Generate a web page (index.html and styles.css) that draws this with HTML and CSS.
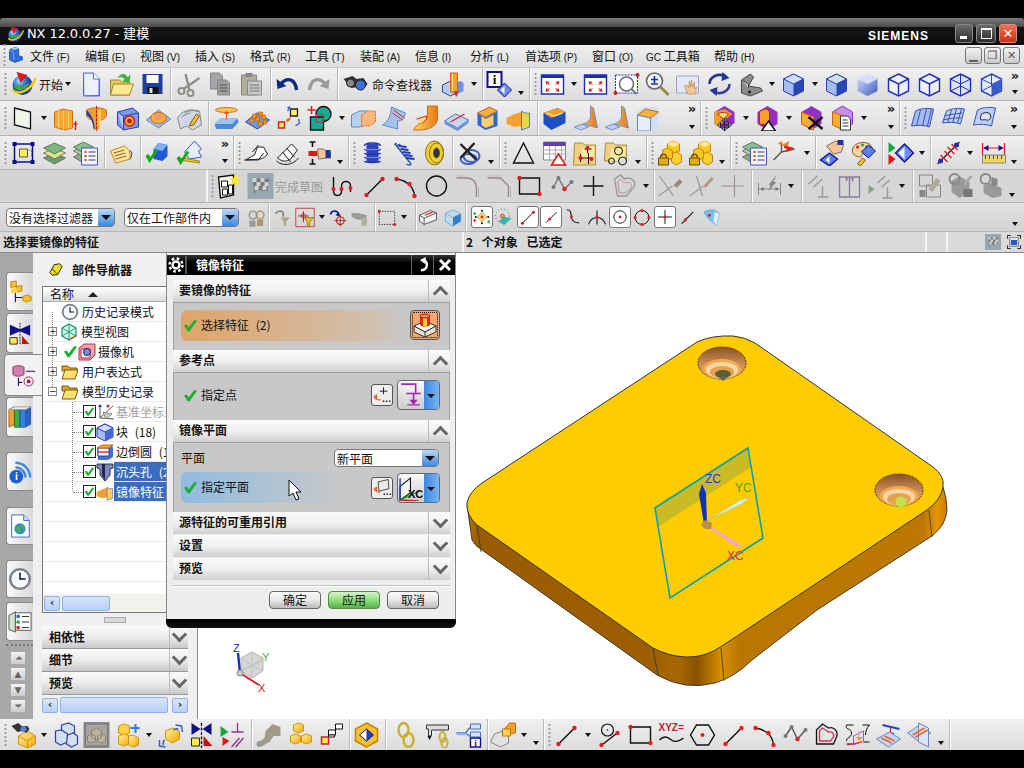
FILE: index.html
```html
<!DOCTYPE html>
<html lang="zh">
<head>
<meta charset="utf-8">
<title>NX 12.0.0.27 - 建模</title>
<link rel="stylesheet" href="styles.css">
</head>
<body>
<svg class="defs" aria-hidden="true">
<defs>
<linearGradient id="gSide" x1="0" x2="1" y1="0" y2="0"><stop offset="0" stop-color="#b97c00"/><stop offset=".02" stop-color="#9a5c00"/><stop offset=".38" stop-color="#9c5e00"/><stop offset=".44" stop-color="#a86800"/><stop offset=".48" stop-color="#8a5200"/><stop offset=".53" stop-color="#d89000"/><stop offset=".57" stop-color="#b97600"/><stop offset=".95" stop-color="#bc7800"/><stop offset=".98" stop-color="#e69400"/><stop offset="1" stop-color="#c67e00"/></linearGradient>
<linearGradient id="gBore" x1="0" x2="0" y1="0" y2="1"><stop offset="0" stop-color="#8a5226"/><stop offset=".5" stop-color="#c88a50"/><stop offset="1" stop-color="#e8b070"/></linearGradient>
<linearGradient id="gOrange" x1="0" x2="1" y1="0" y2="0"><stop offset="0" stop-color="#ffd860"/><stop offset="1" stop-color="#e87818"/></linearGradient>
<linearGradient id="gYel" x1="0" x2="1" y1="0" y2="1"><stop offset="0" stop-color="#fff2a0"/><stop offset="1" stop-color="#f2a800"/></linearGradient>
<linearGradient id="gBlue" x1="0" x2="1" y1="0" y2="1"><stop offset="0" stop-color="#dbe6ff"/><stop offset="1" stop-color="#3a58c4"/></linearGradient>
<radialGradient id="gGlobe" cx=".35" cy=".3"><stop offset="0" stop-color="#bfe8ff"/><stop offset=".55" stop-color="#2f7fe0"/><stop offset="1" stop-color="#1b3fa0"/></radialGradient>

<symbol id="globe" viewBox="0 0 26 26"><circle cx="12" cy="14" r="10" fill="url(#gGlobe)"/><path d="M4 12c4 4 10 4 16-1-3 7-11 11-16 6z" fill="#3fa83f"/><path d="M2 19c6 6 19 0 23-12" fill="none" stroke="#f6c800" stroke-width="2.4"/><path d="M6 1l11 3-7 8z" fill="#e01818"/></symbol>
<symbol id="nxm" viewBox="0 0 26 26"><path d="M6 3l8-2 5 2v11l6 2v5l-12 4-9-4V6z" fill="#2e6cd8" stroke="#123a90"/><path d="M6 3l8-2 5 2-8 2z" fill="#a8ccff"/><path d="M4 6l7 2v14" fill="none" stroke="#a8ccff"/></symbol>
<symbol id="doc" viewBox="0 0 26 26"><path d="M6 2h10l6 6v17H6z" fill="url(#gBlue)" stroke="#5a66d8"/><path d="M7 3h9l5 5v16H7z" fill="#eef0ff"/><path d="M16 2v6h6" fill="#fff" stroke="#5a66d8"/></symbol>
<symbol id="openf" viewBox="0 0 26 26"><path d="M2 9h9l2 2h8v13H2z" fill="#e8c868" stroke="#a48820"/><path d="M5 13h20l-4 11H2z" fill="#fbe896" stroke="#a48820"/><path d="M9 7c3-5 8-5 10-1l3-2-1 8-7-2 2-2c-2-2-4-2-7-1z" fill="#3db43d"/></symbol>
<symbol id="save" viewBox="0 0 26 26"><path d="M3 3h20v20H3z" fill="#1f3f9e"/><path d="M7 4h12v8H7z" fill="#fff"/><path d="M8 16h11v7H8z" fill="#111"/><path d="M10 17h3v5h-3z" fill="#ddd"/></symbol>
<symbol id="cut" viewBox="0 0 26 26"><circle cx="6" cy="20" r="3" fill="none" stroke="#8f8f86" stroke-width="2"/><circle cx="15" cy="22" r="3" fill="none" stroke="#8f8f86" stroke-width="2"/><path d="M8 18L24 7M14 19L10 3" stroke="#8f8f86" stroke-width="2.4"/></symbol>
<symbol id="copy" viewBox="0 0 26 26"><path d="M4 2h9l3 3v13H4z" fill="#a3a3a8" stroke="#888"/><path d="M11 9h9l3 3v12H11z" fill="#9f9f9f" stroke="#888"/><path d="M13 14h8M13 17h8M13 20h8" stroke="#555"/></symbol>
<symbol id="paste" viewBox="0 0 26 26"><path d="M3 4h15v20H3z" fill="#b0ad9a" stroke="#8a8878"/><path d="M7 2h7v4H7z" fill="#888"/><path d="M9 10h14v14H9z" fill="#c8c8c8" stroke="#888"/><path d="M11 14h10M11 17h10M11 20h10" stroke="#777"/></symbol>
<symbol id="undo" viewBox="0 0 26 26"><path d="M7 12c6-6 14-4 15 7" fill="none" stroke="#0c2a7e" stroke-width="3.4"/><path d="M2 8l1 10 9-3z" fill="#0c2a7e"/></symbol>
<symbol id="redo" viewBox="0 0 26 26"><path d="M19 12c-6-6-14-4-15 7" fill="none" stroke="#9a9a9a" stroke-width="3.4"/><path d="M24 8l-1 10-9-3z" fill="#9a9a9a"/></symbol>
<symbol id="bino" viewBox="0 0 26 26"><path d="M1 8l9-3 4 3 7-1 4 6-5 6-5-3-6 1z" fill="#2e2e2e"/><circle cx="18" cy="14" r="5" fill="#3f6fd8" stroke="#222"/><circle cx="8" cy="12" r="4" fill="#888" stroke="#222"/></symbol>
<symbol id="role" viewBox="0 0 26 26"><path d="M3 14l8-4 8 4v7l-8 4-8-4z" fill="#b8caf5" stroke="#2a48b0"/><path d="M13 13l8-3 3 2v8l-8 4z" fill="#6d93e8"/><path d="M11 2h7v19h-7z" fill="#f7a028" stroke="#d86010"/><path d="M13 3v17" stroke="#ffe080"/><path d="M14 21l3 5 2-6z" fill="#e02020"/></symbol>
<symbol id="info" viewBox="0 0 26 26"><path d="M1 1h14v15H1z" fill="#fff" stroke="#10108a" stroke-width="2"/><text x="8" y="13" text-anchor="middle" font-family="Liberation Serif" font-weight="700" font-size="13" fill="#000">i</text><path d="M18 12l7 7-7 7-7-7z" fill="#6c8cf0" stroke="#10108a"/><path d="M18 15l-4 4 4 4z" fill="#fff"/></symbol>
<symbol id="fit" viewBox="0 0 26 26"><path d="M2 4h22v19H2z" fill="#fff" stroke="#1c2fa8" stroke-width="1.4"/><path d="M2 4h22v3H2z" fill="#1c2fa8"/><path d="M6 10l4 1-3 3zM20 10l-4 1 3 3zM6 21l4-1-3-3zM20 21l-4-1 3-3z" fill="#e02020"/><path d="M8 12l2 2M18 12l-2 2M8 19l2-2M18 19l-2-2" stroke="#e02020"/></symbol>
<symbol id="wnd" viewBox="0 0 26 26"><path d="M1 7V1h6M19 1h6v6M25 19v6h-6M7 25H1v-6" fill="none" stroke="#333" stroke-width="2"/><path d="M5 5h16v16H5z" fill="#fff" stroke="#223"/><path d="M7 9h12v10H7z" fill="#2a58c8"/></symbol>
<symbol id="zrect" viewBox="0 0 26 26"><path d="M2 4h22v18H2z" fill="#fff" stroke="#2030c0" stroke-dasharray="2 1"/><circle cx="13" cy="13" r="7" fill="#fff" stroke="#666" stroke-width="1.5"/><path d="M18 18l5 5" stroke="#777" stroke-width="2"/><circle cx="24" cy="4" r="2" fill="#d01818"/><circle cx="2" cy="22" r="2" fill="#d01818"/></symbol>
<symbol id="zin" viewBox="0 0 26 26"><circle cx="10" cy="10" r="8" fill="#eef2f2" stroke="#667" stroke-width="1.6"/><path d="M10 5v7M6.5 8.500h7M6.500 13h7" stroke="#1c2f90" stroke-width="1.600"/><path d="M16 16l8 8" stroke="#9a8a50" stroke-width="3"/></symbol>
<symbol id="pan" viewBox="0 0 26 26"><path d="M1 5h22v17H1z" fill="#e4e8f6" stroke="#9aa4c8"/><path d="M12 23l-3-8 2-1 2 3 1-7 1 6 1-7 1 7 2-5 0 7 2-2-1 7z" fill="#f4c590" stroke="#b08040" stroke-width=".6"/></symbol>
<symbol id="rot" viewBox="0 0 26 26"><path d="M3 13C3 6 11 2 18 5" fill="none" stroke="#1c3894" stroke-width="2.600"/><path d="M23 13c0 7-8 11-15 8" fill="none" stroke="#3a3aa0" stroke-width="2.600"/><path d="M16 1l7 6-8 3zM10 25l-7-6 8-3z" fill="#1c3894"/></symbol>
<symbol id="cam" viewBox="0 0 26 26"><path d="M4 18V9l9-6 3 3-5 9 12 2 2 3-12 5-9-3z" fill="#8c8c8c" stroke="#444"/><path d="M5 9l6 4v4" fill="#c4c4c4" stroke="#444"/><circle cx="12" cy="21" r="1.500" fill="#222"/></symbol>
<symbol id="cS" viewBox="0 0 26 26"><path d="M13 3l10 5v12l-10 5-10-5V8z" fill="#a4bcf4" stroke="#2a3fb0"/><path d="M3 8l10 5 10-5-10-5z" fill="#d0ddfc" stroke="#2a3fb0"/><path d="M13 13l10-5v12l-10 5z" fill="#2648b6"/></symbol>
<symbol id="cR" viewBox="0 0 26 26"><path d="M13 3l10 5v12l-10 5-10-5V8z" fill="url(#gBlue)"/><path d="M3 8l10 5 10-5-10-5z" fill="#d6e0fb"/></symbol>
<symbol id="cW" viewBox="0 0 26 26"><path d="M13 3l10 5v12l-10 5-10-5V8z" fill="#eef0fc" stroke="#1c2fc0" stroke-width="1.400"/><path d="M3 8l10 5 10-5M13 13v12" fill="none" stroke="#1c2fc0" stroke-width="1.400"/></symbol>
<symbol id="cW2" viewBox="0 0 26 26"><path d="M13 3l10 5v12l-10 5-10-5V8z" fill="#dde3fb" stroke="#1c2fc0" stroke-width="1.400"/><path d="M3 8l10 5 10-5M13 13v12M3 20l10-5 10 5M13 3v12" fill="none" stroke="#1c2fc0"/></symbol>
<symbol id="cW3" viewBox="0 0 26 26"><path d="M13 3l10 5v12l-10 5-10-5V8z" fill="#e6ebfb" stroke="#2a4ac0" stroke-width="1.400"/><path d="M13 13l10-5v12l-10 5z" fill="#3a5cc8"/><path d="M3 8l10 5M3 20l10-5M13 3v12" fill="none" stroke="#2a4ac0"/></symbol>
<symbol id="sheet" viewBox="0 0 26 26"><path d="M5 3l16 4v17L5 20z" fill="#eef6ec" stroke="#111" stroke-width="1.300"/></symbol>
<symbol id="ext" viewBox="0 0 26 26"><path d="M2 7l8-3 10 2v17l-8 2-10-3z" fill="#f6a834" stroke="#d86a10"/><path d="M11 6v19M6 5v18M16 6v18" stroke="#ffd070"/><path d="M23 16v9M21 19h4" stroke="#d81818" stroke-width="1.400"/></symbol>
<symbol id="rev" viewBox="0 0 26 26"><path d="M3 5c5-3 15-3 20 0v5c-1 5-5 4-7 6l-1 8h-4l-1-8c-2-2-6-1-7-6z" fill="#f4a030" stroke="#d87010"/><path d="M3 5c4 4 8 9 8 19h-1C9 14 6 12 3 10z" fill="#1f3fb0"/><path d="M13 1v25" stroke="#c01818" stroke-dasharray="3 1"/><path d="M15 5h2v19h-2z" fill="#ffd860"/></symbol>
<symbol id="hole" viewBox="0 0 26 26"><path d="M3 7l15-4 6 5v14l-15 3-6-5z" fill="#7b9bea" stroke="#2a3fb0"/><path d="M3 7l6 4v14" fill="#b9ccf6" stroke="#2a3fb0"/><path d="M9 11l15-3" stroke="#2a3fb0"/><circle cx="15" cy="16" r="5" fill="#f1c232" stroke="#d01818" stroke-width="1.500"/><circle cx="15" cy="16" r="2.500" fill="#d01818"/></symbol>
<symbol id="boss" viewBox="0 0 26 26"><path d="M1 15L13 5l12 9-12 9z" fill="#9ec0ee" stroke="#5a88c8"/><ellipse cx="13" cy="13" rx="8" ry="5.500" fill="#f2b23c" stroke="#d06018"/><ellipse cx="13" cy="12" rx="5" ry="3" fill="#f4966c"/></symbol>
<symbol id="patch" viewBox="0 0 26 26"><path d="M1 13C5 6 13 3 23 6l2 14-9 5-6-4-6 3z" fill="#cfd8ea" stroke="#888"/><path d="M8 8c5-3 10-3 14-1M5 12c3-2 6-4 9-4" stroke="#888" fill="none"/><path d="M14 18l6-9 3 2-6 9-4 1z" fill="#f5c132" stroke="#905010"/></symbol>
<symbol id="emb" viewBox="0 0 26 26"><path d="M1 20l6-6h17l1 3-6 7H3z" fill="#4a88d8"/><path d="M1 18l6-5h17l-5 6H3z" fill="#9cc4f0"/><ellipse cx="13" cy="5" rx="11" ry="2.500" fill="#f6c650" stroke="#e07020"/><path d="M13 15V7M11 9l2-3 2 3" stroke="#e06020" fill="#e06020"/></symbol>
<symbol id="pat" viewBox="0 0 26 26"><path d="M1 17L12 8l13 7-12 9z" fill="#6e9ae0" stroke="#2a4ca8"/><g fill="#f09628" stroke="#b85c10" stroke-width=".6"><path d="M8 9h4v4H8zM14 7h4v4h-4zM5 14h4v4H5zM11 12h4v4h-4zM17 10h4v4h-4zM14 17h4v4h-4zM19 15h3v4h-3z"/></g></symbol>
<symbol id="off" viewBox="0 0 26 26"><path d="M3 17h6v6H3z" fill="#ffec60" stroke="#e01818" stroke-width="1.400"/><path d="M15 4h7v7h-7z" fill="#ffec60" stroke="#222" stroke-width="1.300"/><path d="M10 15l5-3v3l-3 2z" fill="#f06820"/><path d="M12 3c3-2 3-1 0 3M23 14l1 4-4 3" fill="none" stroke="#3060d0" stroke-width="1.300"/></symbol>
<symbol id="unite" viewBox="0 0 26 26"><circle cx="17" cy="9" r="7.500" fill="#18a898" stroke="#111" stroke-width="1.300"/><path d="M4 12h13v13H4z" fill="#18a898" stroke="#111" stroke-width="1.300"/><path d="M10 9h7v8h-7z" fill="none" stroke="#c03030"/><path d="M1 5h8M5 1v8" stroke="#e01818" stroke-width="1.400"/></symbol>
<symbol id="trim" viewBox="0 0 26 26"><path d="M1 10l8-4h9v13l-9 3H1z" fill="#b8d0f0" stroke="#5a88c8"/><path d="M11 10l6-4h8v11l-6 4h-8z" fill="#f8b880" stroke="#e86820" stroke-dasharray="2 1"/></symbol>
<symbol id="rib" viewBox="0 0 26 26"><path d="M10 2l14 6c-2 6-3 8-8 8l0 8-15-4c6-4 8-8 9-18z" fill="#a0c4ee" stroke="#5a88c8"/><path d="M12 5l11 8M11 8l10 7" stroke="#e02020"/></symbol>
<symbol id="sw" viewBox="0 0 26 26"><path d="M15 1h10v13c-1 7-8 11-18 11H1c2-4 6-7 9-8l5-5z" fill="url(#gOrange)" stroke="#d06818"/><path d="M4 14l10-3v3l-5 5" fill="#f6dc80" stroke="#e02020"/></symbol>
<symbol id="cut2" viewBox="0 0 26 26"><path d="M1 16L12 9l13 6-11 8z" fill="#c4d6f2" stroke="#5a78b8"/><path d="M1 16v3l13 7 11-8v-3l-11 8z" fill="#6e92d8"/><path d="M7 17l14-8" stroke="#e02020" stroke-width="1.300"/></symbol>
<symbol id="shell" viewBox="0 0 26 26"><path d="M3 8l12-6 8 4v15l-12 4-8-5z" fill="#2a6ad0"/><path d="M3 8l8 5 12-7" fill="#f6a030"/><path d="M3 8l12-6 8 4-12 6z" fill="#f4b048" stroke="#d06818"/><path d="M7 11l4 3 8-4v10l-8 3-4-3z" fill="#ffcc70"/></symbol>
<symbol id="mir" viewBox="0 0 26 26"><path d="M1 13l8-4 7-2 8 4-3 13-7-3-5 1-8-3z" fill="#f6a030"/><path d="M16 6c3 3 8 2 8 2v14l-8 3z" fill="#f5d050" stroke="#4c78d0"/></symbol>
<symbol id="blk" viewBox="0 0 26 26"><path d="M2 8l14-5 8 4v11l-14 7-8-6z" fill="#1c50c8"/><path d="M2 8l8 5 14-6-8-4z" fill="#f69a28"/><path d="M5 8l8 3 8-3" stroke="#ffe080" stroke-width="1.500" fill="none"/></symbol>
<symbol id="sfold" viewBox="0 0 26 26"><path d="M3 23l8-4 14 4-4-20-3-2v10c0 6-5 7-15 12z" fill="url(#gOrange)" stroke="#7090d0"/><path d="M2 22l8-3 6 3-8 3z" fill="#bcd0f0" stroke="#7090d0"/></symbol>
<symbol id="sbox" viewBox="0 0 26 26"><path d="M3 7l6-5h15v20l-8 4H3z" fill="#cfdff6"/><path d="M3 10l8-6 13 3-8 6z" fill="#f6b53a" stroke="#d06818"/><path d="M3 10l13 3v13H3z" fill="#e6eefb" stroke="#5a88c8"/></symbol>
<symbol id="pMove" viewBox="0 0 26 26"><path d="M3 7l10-6 10 6v11l-10 7-10-6z" fill="#9030c8"/><path d="M3 7l10-3 8 5-7 5-7 8-4-3z" fill="#f0a020"/><path d="M6 9c4-2 8-2 11 0l-5 5z" fill="#ffe080" stroke="#d02020"/><path d="M13 14v12M7 20h12M13 13l-3 3h6zM13 26l-3-3h6zM6 20l3-3v6zM20 20l-3-3v6z" fill="#fff" stroke="#222"/></symbol>
<symbol id="pTri" viewBox="0 0 26 26"><path d="M3 7l10-6 10 6v12l-10 6-10-6z" fill="#9030c8"/><path d="M5 7c4-4 10-4 10 1v12l-10-1z" fill="#f6a028" stroke="#d01818"/><path d="M14 16l7 10H7z" fill="#fff" stroke="#111" stroke-width="1.500"/></symbol>
<symbol id="pX" viewBox="0 0 26 26"><path d="M3 7l10-6 10 6v12l-10 6-10-6z" fill="#9030c8"/><path d="M3 7l12 5v13l-12-6z" fill="#f6b030" stroke="#d06018"/><path d="M10 12l14 12M24 12L10 24" stroke="#111" stroke-width="2.400"/></symbol>
<symbol id="pDoc" viewBox="0 0 26 26"><path d="M3 7l10-6 10 6v12l-10 6-10-6z" fill="#c890e0" stroke="#9030c8"/><path d="M3 7l11 4v14l-11-5z" fill="#f6b030" stroke="#d06018"/><path d="M11 11h7l3 3v11H11z" fill="#fff" stroke="#334"/><path d="M13 15h5M13 18h6M13 21h6" stroke="#334"/></symbol>
<symbol id="sA" viewBox="0 0 26 26"><path d="M6 6c6-3 12-3 18-2l-4 18c-5-2-11-2-18-1z" fill="#a4bcf4" stroke="#3a50b8"/><path d="M11 5L7 21M17 4l-4 17M22 4l-4 17" stroke="#3a50b8"/></symbol>
<symbol id="sB" viewBox="0 0 26 26"><path d="M6 6c6-3 12-3 18-2l-4 15c-5-2-11-2-18-1z" fill="#bccdf6" stroke="#3a50b8"/><path d="M11 5L7 18M16 4l-4 14M21 4l-4 14M4 11c6-2 12-2 18-3M3 15c6-2 12-2 18-2" stroke="#3a50b8" fill="none"/></symbol>
<symbol id="sC" viewBox="0 0 26 26"><path d="M6 5c6-3 12-3 18-2l-4 18c-5-2-11-2-18-1z" fill="#bccdf6" stroke="#3a50b8"/><path d="M10 9c3-2 8-2 9 1s-1 6-4 5-6 1-6-1 0-3 1-5z" fill="#dfe6f6" stroke="#222"/></symbol>
<symbol id="bsel" viewBox="0 0 26 26"><path d="M4 4h18v18H4z" fill="none" stroke="#10108a" stroke-width="1.500"/><path d="M2 2h4v4H2zM20 2h4v4h-4zM2 20h4v4H2zM20 20h4v4h-4z" fill="#10108a"/><path d="M9 9h8v8H9z" fill="#ffec50" stroke="#555"/><path d="M18 10h3v7" stroke="#555" fill="none" stroke-dasharray="1 1"/></symbol>
<symbol id="lay" viewBox="0 0 26 26"><g stroke="#4a5040" stroke-width=".7"><path d="M2 18l11-5 11 5-11 6z" fill="#6aa070"/><path d="M2 13l11-5 11 5-11 6z" fill="#e0e090"/><path d="M2 8l11-5 11 5-11 6z" fill="#7ab880"/></g></symbol>
<symbol id="layL" viewBox="0 0 26 26"><g stroke="#4a5040" stroke-width=".7"><path d="M1 17l10-5 10 5-10 6z" fill="#88a890"/><path d="M1 11l10-5 10 5-10 6z" fill="#b0cca8"/><path d="M1 7l10-5 10 5-10 6z" fill="#88c090"/></g><path d="M9 8h16v17H9z" fill="#f0f2ff" stroke="#4455bb"/><path d="M12 12h2M12 16h2M12 20h2" stroke="#d05000" stroke-width="2"/><path d="M16 12h7M16 16h7M16 20h7" stroke="#445"/></symbol>
<symbol id="tag" viewBox="0 0 26 26"><path d="M2 11l14-5 5 5 1 8-15 4z" fill="#ffe8a0" stroke="#d08020"/><path d="M5 13l11-3M6 16l11-3M7 19l11-3" stroke="#8a6020"/><path d="M21 11c3-1 3 6 0 8" fill="none" stroke="#444"/></symbol>
<symbol id="chkB" viewBox="0 0 26 26"><path d="M9 9l5-6 9 2v11l-5 5-9-2z" fill="#1f58d8"/><path d="M9 9l9 2 5-6-9-2z" fill="#7ab0f8"/><path d="M1 16l4 7L14 10l-3-1-5 8-2-3z" fill="#18a818"/></symbol>
<symbol id="chkY" viewBox="0 0 26 26"><path d="M9 12L19 1l7 8-3 2 3 6-12 2z" fill="#e6ecfb" stroke="#3a58c4"/><path d="M6 18l18 3v2L4 20z" fill="#f0d000" stroke="#a09000"/><path d="M1 18l4 7L14 12l-3-1-5 8-2-3z" fill="#18a818"/></symbol>
<symbol id="bl1" viewBox="0 0 26 26"><path d="M2 20l9-5 3-8 6 0 4 7c-2 3-4 4-7 5z" fill="#fff" stroke="#222"/><path d="M9 12l6-7M15 20l5-7M1 20h14" stroke="#222"/></symbol>
<symbol id="bl2" viewBox="0 0 26 26"><path d="M3 18l6-6 8-8 6 6-7 9c-4 3-8 3-13-1z" fill="#f4f4f4" stroke="#222"/><path d="M8 12l8 10M12 8l8 9" stroke="#222"/><path d="M2 21c5 5 16 5 22-3" stroke="#222" fill="none"/></symbol>
<symbol id="ihand" viewBox="0 0 26 26"><path d="M4 2h6M7 2v5M4 24h6M7 19v5" stroke="#111" stroke-width="1.600"/><path d="M3 11h9v5H3z" fill="#e01818"/><path d="M12 9h6l3 3h4v6h-3l-9 1z" fill="#f4c590" stroke="#776"/><path d="M20 10h5v8h-5z" fill="#2030a0"/></symbol>
<symbol id="coil" viewBox="0 0 26 26"><path d="M7 4h12v18H7z" fill="#2f45c0"/><path d="M5 6c0-4 16-4 16 0M5 9c0 2 16 2 16 0M5 13c0 2 16 2 16 0M5 17c0 2 16 2 16 0M5 21c0 2 16 2 16 0" fill="none" stroke="#24349e" stroke-width="1.400"/><path d="M6 9c0 1 14 1 14 0M6 17c0 1 14 1 14 0" stroke="#88a4f0" fill="none"/></symbol>
<symbol id="sprg" viewBox="0 0 26 26"><path d="M6 3c-4 2 1 3 4 1M6 6l13 16M19 22c3 3 0 4-3 2" fill="none" stroke="#3050c0" stroke-width="1.500"/><path d="M8 6l8 1M10 9l8 1M12 12l8 1M14 15l8 1M16 18l8 1" stroke="#2038b0" stroke-width="2"/></symbol>
<symbol id="wash" viewBox="0 0 26 26"><ellipse cx="13" cy="13" rx="9" ry="12" fill="#f0d030" stroke="#887010"/><ellipse cx="15" cy="13" rx="7" ry="10" fill="none" stroke="#907010"/><ellipse cx="15" cy="13" rx="3" ry="5" fill="#334" stroke="#554"/></symbol>
<symbol id="spx" viewBox="0 0 26 26"><ellipse cx="15" cy="16" rx="8" ry="6" fill="none" stroke="#4060c8" stroke-width="2"/><ellipse cx="12" cy="19" rx="8" ry="5" fill="none" stroke="#4060c8" stroke-width="2"/><path d="M4 4l16 16M18 3L4 18" stroke="#222" stroke-width="2.400"/></symbol>
<symbol id="tri" viewBox="0 0 26 26"><path d="M13 3l10 20H3z" fill="none" stroke="#111" stroke-width="1.400"/></symbol>
<symbol id="tbl" viewBox="0 0 26 26"><path d="M2 2h22v18H2z" fill="#fff" stroke="#888"/><path d="M2 2h22v4H2z" fill="#6040b0"/><path d="M2 10h22M2 14h22M8 6v14M14 6v14M20 6v14" stroke="#aaa"/><path d="M17 14l7 11h-14z" fill="#fff" stroke="#d01818" stroke-width="1.500"/></symbol>
<symbol id="fx" viewBox="0 0 26 26"><path d="M2 3h8l2 2h11v20H1z" fill="#f0d080" stroke="#a89040"/><path d="M10 8l12-2-1 13H8z" fill="#f8eaa0"/><path d="M8 18h11M15 6v7M12 9h7M8 14v8M16 13l0 11" stroke="#111"/><circle cx="15" cy="8" r="2" fill="#e01818"/><circle cx="8" cy="18" r="2" fill="#e01818"/><circle cx="19" cy="19" r="2" fill="#e01818"/></symbol>
<symbol id="fo" viewBox="0 0 26 26"><path d="M2 3h8l2 2h11v16H1z" fill="#f0d080" stroke="#a89040"/><path d="M8 9l15-2-3 14H5z" fill="#f8eaa0"/><circle cx="15" cy="11" r="4" fill="none" stroke="#111"/><circle cx="8" cy="21" r="3" fill="none" stroke="#111"/><circle cx="19" cy="21" r="4" fill="#ddd" stroke="#111"/></symbol>
<symbol id="lk1" viewBox="0 0 26 26"><path d="M11 4l6-3 6 3v7l-6 3-6-3z" fill="#ffc820" stroke="#c88000"/><path d="M11 4l6 3 6-3-6-3z" fill="#ffec90"/><path d="M15 14l5-2 5 3v7l-5 3-5-3z" fill="#ffd030" stroke="#c88000"/><path d="M6 10l5-2 5 3v7l-5 2-5-3z" fill="#ffc820" stroke="#c88000"/><path d="M2 18h10v7H2z" fill="#d8b010" stroke="#705000"/><path d="M4 18c0-5 6-5 6 0" fill="none" stroke="#705000" stroke-width="1.500"/></symbol>
<symbol id="cs" viewBox="0 0 26 26"><path d="M9 12V3M9 12l-8 8M9 12l13-3" stroke="#555" stroke-width="1.400" fill="none"/><path d="M9 5l8-4-2 6z" fill="#f08020"/><path d="M14 6l8 2-8 4z" fill="#e01818"/><circle cx="13" cy="7" r="1.500" fill="#e01818"/><path d="M5 4l4-3 2 4z" fill="#f08020"/></symbol>
<symbol id="hd" viewBox="0 0 26 26"><path d="M14 14l-7-8 9-5 8 4-2 7z" fill="#f4c590" stroke="#776"/><path d="M18 0h6v5h-6z" fill="#2030a0"/><path d="M10 13l8 6-8 7-9-6z" fill="#5c80ea" stroke="#10108a" stroke-width="1.300"/><path d="M10 16l-4 4 4 3z" fill="#fff"/></symbol>
<symbol id="pal" viewBox="0 0 26 26"><path d="M2 9c1-7 15-9 19-3 3 5-6 6-8 7-3 2-2 5-4 4C5 16 1 15 2 9z" fill="#f4d59a" stroke="#906030"/><circle cx="7" cy="7" r="1.500" fill="#e02020"/><circle cx="12" cy="5" r="1.500" fill="#30a030"/><circle cx="16" cy="7" r="1.500" fill="#3060e0"/><path d="M18 5l7 6-7 7-7-6z" fill="#5c80ea" stroke="#10108a"/><path d="M7 24l5-6 3 2-5 6z" fill="#f0c030" stroke="#906010"/></symbol>
<symbol id="play" viewBox="0 0 26 26"><path d="M1 2l7 6-7 5z" fill="#18a840"/><path d="M1 14l7 5-7 6z" fill="#e01818"/><path d="M17 4l9 9-9 9-9-9z" fill="#6c8cf0" stroke="#10108a" stroke-width="1.300"/><path d="M17 7l-6 6 6 6z" fill="#fff"/></symbol>
<symbol id="hatch" viewBox="0 0 26 26"><path d="M2 24L24 2" stroke="#222" stroke-width="1.200"/><path d="M5 15l7 7M9 11l7 7M12 7l7 7M16 4l6 6" stroke="#e01818" stroke-width="1.400"/><circle cx="21" cy="5" r="2.500" fill="#1c2fc0"/><circle cx="5" cy="21" r="2.500" fill="#1c2fc0"/></symbol>
<symbol id="dim" viewBox="0 0 26 26"><path d="M2 3v12M24 3v12M3 8h20" stroke="#e01818" stroke-width="1.200"/><path d="M3 8l5-3v6zM23 8l-5-3v6z" fill="#10108a"/><path d="M2 15h23v8H2z" fill="#f2d860" stroke="#888"/><path d="M5 15v4M9 15v4M13 15v4M17 15v4M21 15v4" stroke="#555"/></symbol>
<symbol id="skt" viewBox="0 0 26 26"><path d="M2 4l15-2v20L4 25z" fill="#f6f6ee" stroke="#111" stroke-width="1.400"/><path d="M5 8h6v6H5zM6 16h5v6H6zM12 12h4v9h-4z" fill="#fff" stroke="#111"/><path d="M19 1l1 4 5 0-4 3 2 5-4-3-4 2 1-4-3-3h4z" fill="#ffe820"/></symbol>
<symbol id="flag" viewBox="0 0 26 26"><path d="M0 0h26v26H0z" fill="#97a8b0"/><path d="M5 5l17 1-2 12-12-1-1 6z" fill="#7a7a7a"/><path d="M5 5h4v4H5zM13 5h4v4h-4zM9 9h4v4H9zM17 9h4v4h-4zM7 13h4v4H7zM15 13h4v4h-4z" fill="#cfd2d4"/></symbol>
<symbol id="crv" viewBox="0 0 26 26"><path d="M3 4v14c0 6 8 6 8 0v-5c0-6 9-6 9 0v6" fill="none" stroke="#111" stroke-width="1.400"/><g fill="#e02020"><circle cx="3" cy="16" r="2"/><circle cx="11" cy="16" r="2"/><circle cx="20" cy="15" r="2"/></g></symbol>
<symbol id="ln" viewBox="0 0 26 26"><path d="M4 23L21 6" stroke="#111" stroke-width="1.400"/><circle cx="5" cy="22" r="2.200" fill="#e02020"/><circle cx="21" cy="6" r="2.200" fill="#e02020"/></symbol>
<symbol id="arc" viewBox="0 0 26 26"><path d="M4 6c8 1 17 6 18 17" fill="none" stroke="#111" stroke-width="1.400"/><circle cx="4" cy="6" r="2.200" fill="#e02020"/><circle cx="17" cy="11" r="2.200" fill="#e02020"/><circle cx="22" cy="23" r="2.200" fill="#e02020"/></symbol>
<symbol id="circ" viewBox="0 0 26 26"><circle cx="13" cy="13" r="10" fill="none" stroke="#111" stroke-width="1.400"/></symbol>
<symbol id="fil" viewBox="0 0 26 26"><path d="M2 5h10c6 0 10 4 10 12v7" fill="none" stroke="#9a8a88" stroke-width="1.400"/><path d="M2 3h9M24 14v10" stroke="#bbb"/></symbol>
<symbol id="chm" viewBox="0 0 26 26"><path d="M2 5h13l8 8v11" fill="none" stroke="#9a8a88" stroke-width="1.400"/><path d="M2 3h13M25 14v10" stroke="#bbb"/></symbol>
<symbol id="rct" viewBox="0 0 26 26"><path d="M3 5h20v16H3z" fill="none" stroke="#111" stroke-width="1.400"/><circle cx="3" cy="5" r="2.200" fill="#e02020"/><circle cx="23" cy="21" r="2.200" fill="#e02020"/></symbol>
<symbol id="poly" viewBox="0 0 26 26"><path d="M4 14l5-9 6 11 7-7" fill="none" stroke="#777" stroke-width="1.400"/><g fill="#777"><circle cx="4" cy="14" r="2"/><circle cx="22" cy="9" r="2"/><circle cx="9" cy="5" r="2"/></g><circle cx="15" cy="16" r="2.200" fill="#e02020"/></symbol>
<symbol id="plus" viewBox="0 0 26 26"><path d="M13 3v20M3 13h20" stroke="#111" stroke-width="1.400"/></symbol>
<symbol id="ofs" viewBox="0 0 26 26"><path d="M3 6l6-4 4 4c6-3 11 2 10 7l-8 10H6z" fill="none" stroke="#999" stroke-width="1.400"/><path d="M6 9l3-3 4 4c6-2 8 2 7 4l-6 6H8z" fill="none" stroke="#c09090"/></symbol>
<symbol id="ers1" viewBox="0 0 26 26"><path d="M2 3l14 20M1 23L15 13" stroke="#999" stroke-width="1.200"/><path d="M16 12l6-6 3 3-6 6z" fill="#a08880"/></symbol>
<symbol id="ers2" viewBox="0 0 26 26"><path d="M8 3l6 20M1 23L15 13" stroke="#999" stroke-width="1.200"/><path d="M15 13l8-9 2 2-8 9z" fill="#b09878"/></symbol>
<symbol id="trm" viewBox="0 0 26 26"><path d="M2 13h22M15 2v22" stroke="#a09090" stroke-width="1.200"/><path d="M5 4l10 9" stroke="#bbb" stroke-dasharray="2 2"/></symbol>
<symbol id="dgr" viewBox="0 0 26 26"><path d="M2 10v12M24 10v12M2 16h22" stroke="#888"/><path d="M4 16l3-2v4zM22 16l-3-2v4z" fill="#666"/><path d="M12 12l8-10-3 7h3l-8 9 2-6z" fill="#888"/></symbol>
<symbol id="par" viewBox="0 0 26 26"><path d="M3 11l9-8M8 14l9-8M12 24h11M17 13v11" stroke="#999" stroke-width="1.400"/></symbol>
<symbol id="bkt" viewBox="0 0 26 26"><path d="M3 4h20v20H3zM13 4v20" fill="none" stroke="#86809a" stroke-width="1.400"/><path d="M9 3l3 3-3 3zM17 3l-3 3 3 3z" fill="#a08090"/></symbol>
<symbol id="pp" viewBox="0 0 26 26"><path d="M1 12l6 4-6 5z" fill="#80a880"/><path d="M10 10l8-7M14 14l8-7M15 25h10M20 14v11" stroke="#999" stroke-width="1.400"/></symbol>
<symbol id="gpen" viewBox="0 0 26 26"><path d="M3 2h13v11H3zM10 12h14v12H10z" fill="none" stroke="#888"/><path d="M3 17h6v7H3z" fill="#888"/><path d="M12 16l8-11 4 3-8 11z" fill="#b0a898"/></symbol>
<symbol id="glk" viewBox="0 0 26 26"><path d="M4 8l8-5 10 6v10l-10 6-8-6z" fill="#9a9a9a"/><circle cx="7" cy="6" r="5" fill="none" stroke="#888" stroke-width="2"/><path d="M16 10l7-8 2 2-7 8z" fill="#aaa"/><path d="M16 16h9v8h-9z" fill="#777"/></symbol>
<symbol id="gbox" viewBox="0 0 26 26"><circle cx="7" cy="6" r="5" fill="none" stroke="#888" stroke-width="2"/><path d="M5 13l8-3 10 5v8l-9 2-9-5z" fill="#999"/><path d="M13 4l6 2v6l-6 2z" fill="#888"/></symbol>
<symbol id="fltG" viewBox="0 0 26 26"><circle cx="8" cy="10" r="5" fill="none" stroke="#98948a" stroke-width="2"/><circle cx="17" cy="10" r="5" fill="none" stroke="#a89870" stroke-width="2"/><path d="M3 17h8v8H3z" fill="#9a9a9a"/><path d="M13 16h8v8h-8z" fill="#a89870"/></symbol>
<symbol id="funG" viewBox="0 0 26 26"><path d="M3 8c6-6 12-3 10 4" fill="none" stroke="#888" stroke-width="2.400"/><path d="M10 13h12l-5 6v5h-3v-5z" fill="#a8a888"/></symbol>
<symbol id="funR" viewBox="0 0 26 26"><path d="M1 1h24v24H1z" fill="none" stroke="#c81818"/><path d="M4 11h14M11 5v14" stroke="#600"/><circle cx="11" cy="11" r="3" fill="none" stroke="#c81818"/><path d="M12 13h12l-5 6v5h-3v-5z" fill="#e8c020" stroke="#907010"/></symbol>
<symbol id="rtg" viewBox="0 0 26 26"><path d="M3 9c2-6 9-6 11 0" fill="none" stroke="#10108a" stroke-width="2"/><path d="M14 6l2 6-6-2z" fill="#10108a"/><circle cx="16" cy="17" r="5" fill="none" stroke="#c01010" stroke-width="1.400"/><path d="M16 9v16M8 17h16" stroke="#c01010"/></symbol>
<symbol id="gHam" viewBox="0 0 26 26"><path d="M2 7h8l12 3-2 6-10 0-8-4z" fill="#9a9a9a"/><path d="M15 13h7v11h-7z" fill="#b0b0a0"/></symbol>
<symbol id="selr" viewBox="0 0 26 26"><path d="M3 5h20v17H3z" fill="none" stroke="#222" stroke-dasharray="2 1.500"/><circle cx="3" cy="5" r="2" fill="#e02020"/><circle cx="23" cy="22" r="2" fill="#e02020"/></symbol>
<symbol id="box1" viewBox="0 0 26 26"><path d="M2 10l14-6 8 3v9L8 22l-6-4z" fill="#f2f2f2" stroke="#333"/><path d="M9 10l10-4" stroke="#e02020" stroke-width="1.500"/><path d="M2 10l6 4 16-7M8 14v8" fill="none" stroke="#333"/></symbol>
<symbol id="box2" viewBox="0 0 26 26"><path d="M3 8l10-5 10 5v10l-10 6-10-6z" fill="#bcdcf4" stroke="#5aa0d8"/><path d="M13 13l10-5v10l-10 6z" fill="#3080d0"/><path d="M3 8l10 5 10-5" stroke="#e86020" stroke-dasharray="1 1" fill="none"/></symbol>
<symbol id="s1" viewBox="0 0 26 26"><path d="M13 6l7 7-7 7-7-7z" fill="#ffe060" stroke="#888"/><g fill="#111"><circle cx="13" cy="4" r="1.500"/><circle cx="22" cy="13" r="1.500"/><circle cx="13" cy="22" r="1.500"/></g><circle cx="4" cy="13" r="1.500" fill="#111"/><path d="M1 5l4 3-4 3zM24 17l-4 3 4 3z" fill="#18a840"/><path d="M1 15l4 3-4 3z" fill="#e02020"/><circle cx="13" cy="13" r="2" fill="#e02020"/></symbol>
<symbol id="s2" viewBox="0 0 26 26"><circle cx="11" cy="11" r="9" fill="none" stroke="#111" stroke-dasharray="1 3"/><path d="M13 12l10 2-10 9-7-5z" fill="#3bb4b4"/><circle cx="11" cy="11" r="2.500" fill="#e8c020" stroke="#c02020"/></symbol>
<symbol id="crv2" viewBox="0 0 26 26"><path d="M5 3c8 0 4 9 7 13 2 3 5 4 9 4" fill="none" stroke="#111" stroke-width="1.400"/><circle cx="11" cy="12" r="2" fill="#e02020"/></symbol>
<symbol id="tang" viewBox="0 0 26 26"><path d="M2 22c2-6 6-9 11-9s9 3 11 9M13 4v18" fill="none" stroke="#111" stroke-width="1.400"/><circle cx="13" cy="12" r="2" fill="#e02020"/></symbol>
<symbol id="cc" viewBox="0 0 26 26"><circle cx="13" cy="13" r="9" fill="none" stroke="#111" stroke-width="1.300"/><circle cx="13" cy="13" r="2" fill="#e02020"/></symbol>
<symbol id="c4" viewBox="0 0 26 26"><circle cx="13" cy="13" r="9" fill="none" stroke="#111" stroke-width="1.300"/><g fill="#e02020"><circle cx="13" cy="4" r="2"/><circle cx="22" cy="13" r="2"/><circle cx="13" cy="22" r="2"/><circle cx="4" cy="13" r="2"/></g></symbol>
<symbol id="plr" viewBox="0 0 26 26"><path d="M13 3v20M3 13h20" stroke="#111" stroke-width="1.400"/><circle cx="13" cy="13" r="2" fill="#e02020"/></symbol>
<symbol id="lnm" viewBox="0 0 26 26"><path d="M6 21L21 6" stroke="#111" stroke-width="1.400"/><circle cx="11" cy="16" r="2.200" fill="#e02020"/></symbol>
<symbol id="fac" viewBox="0 0 26 26"><path d="M4 6c6-4 14-4 20 2l-4 15c-6-5-12-8-16-17z" fill="#7cc0f0" stroke="#4a9ad8"/><path d="M18 6l6 2-4 15-4-5z" fill="#dfeefb"/><circle cx="11" cy="10" r="2" fill="#e02020"/></symbol>
<symbol id="fndC" viewBox="0 0 26 26"><path d="M9 14l9-5 8 5v8l-8 4-9-4z" fill="url(#gYel)" stroke="#d89000"/><path d="M9 14l9 5 8-5M18 19v7" fill="none" stroke="#d89000"/><path d="M2 4l7-3 3 3 6 0 2 3-3 4-4-2-5 1z" fill="#333"/><circle cx="14" cy="7" r="3" fill="#5080e0"/></symbol>
<symbol id="asm" viewBox="0 0 26 26"><g stroke="#3040a8" stroke-width="1.200" fill="#cfe0ee"><path d="M9 3l7-2 6 3v8l-7 2-6-3z"/><path d="M3 9l6-1 6 4v8l-7 3-5-3z"/><path d="M15 13l6-2 4 3v8l-6 3-5-3z"/></g></symbol>
<symbol id="stk" viewBox="0 0 26 26"><path d="M0 0h26v26H0z" fill="#8a8a8c"/><path d="M2 2h22v22H2z" fill="#a8a4a0" stroke="#777"/><path d="M8 9l5-3 5 3v6l-5 3-5-3zM14 14l4-2 4 2v5l-4 2-4-2zM4 14l4-2 4 2v5l-4 2-4-2z" fill="#bdb59c" stroke="#8a8270"/></symbol>
<symbol id="cplus" viewBox="0 0 26 26"><g fill="#ffd24a" stroke="#d89000"><path d="M4 4l6-2 5 2v7l-6 2-5-2z"/><path d="M4 14l6-2 5 2v8l-6 2-5-2z" fill="url(#gYel)"/><path d="M14 14l5-1 5 3v7l-5 2-5-2z" fill="url(#gYel)"/></g><path d="M21 2v9M16 6h9" stroke="#2080f0" stroke-width="2"/></symbol>
<symbol id="cmv" viewBox="0 0 26 26"><path d="M8 9l7-3 7 3v8l-7 4-7-4z" fill="url(#gYel)" stroke="#d89000"/><path d="M18 3l6 1 1 6M2 18l0 6 6 1M6 23c-1-3 0-4 1-5M21 7c-3-1-4 0-5 1" fill="none" stroke="#3060d0" stroke-width="1.500"/></symbol>
<symbol id="mrr" viewBox="0 0 26 26"><path d="M13 1v25" stroke="#111" stroke-dasharray="3 1.500" stroke-width="1.300"/><path d="M3 1l9 6-9 6zM23 1l-9 6 9 6z" fill="#10108a"/><path d="M3 16h8v8H3z" fill="#ffec50" stroke="#222"/><path d="M15 14l9 10h-9z" fill="#c81010"/></symbol>
<symbol id="pp2" viewBox="0 0 26 26"><path d="M1 4l8 6-8 5z" fill="#18a840"/><path d="M3 15l7 4-7 5z" fill="#e01818"/><path d="M18 1v9M12 10h12M12 25l8-9M16 25l8-9" stroke="#903090" stroke-width="1.300"/></symbol>
<symbol id="gJoint" viewBox="0 0 26 26"><path d="M1 22l8-6 1-7 7-7 8 3v9h-7l-4 6-7 4z" fill="#a09c88"/><circle cx="4" cy="22" r="3" fill="#999"/></symbol>
<symbol id="c3y" viewBox="0 0 26 26"><g stroke="#d89000" fill="url(#gYel)"><path d="M6 3l5-2 5 2v6l-5 2-5-2z"/><path d="M3 14l5-2 5 2v6l-5 2-5-2z"/><path d="M14 14l5-2 5 2v6l-5 2-5-2z"/></g></symbol>
<symbol id="wab" viewBox="0 0 26 26"><path d="M17 2h7v5h-7zM10 8h7v5h-7z" fill="#fff" stroke="#111"/><path d="M3 15h7v7H3z" fill="#ffec50" stroke="#e01818" stroke-width="1.500"/><path d="M10 15h6v-2h-6z" fill="#fff" stroke="#111"/><path d="M17 7v2M10 13v2" stroke="#111"/></symbol>
<symbol id="hex" viewBox="0 0 26 26"><path d="M13 1l11 6v12l-11 6-11-6V7z" fill="#f6c030" stroke="#c88000" stroke-width="1.500"/><path d="M13 7l-7 6 7 6z" fill="#fff"/><path d="M13 7l7 6-7 6z" fill="#2040c8"/><path d="M13 7l7 6-7 6-7-6z" fill="none" stroke="#10108a"/></symbol>
<symbol id="lnk" viewBox="0 0 26 26"><ellipse cx="10" cy="8" rx="5" ry="7" fill="none" stroke="#c8b030" stroke-width="2.400"/><ellipse cx="15" cy="18" rx="5" ry="7" fill="none" stroke="#c8b030" stroke-width="2.400"/></symbol>
<symbol id="lnkW" viewBox="0 0 26 26"><path d="M2 3h22v5H7v6H4V7H2z" fill="#ddd" stroke="#333"/><path d="M5 14l-2 0 2 4 2-4z" fill="#111"/><ellipse cx="18" cy="15" rx="3" ry="5" fill="none" stroke="#c8b030" stroke-width="2"/><ellipse cx="20" cy="21" rx="3" ry="5" fill="none" stroke="#c8b030" stroke-width="2"/></symbol>
<symbol id="nav" viewBox="0 0 26 26"><path d="M1 11h9l4-5h10M10 11l4 3h8" stroke="#4070d0" stroke-width="1.300" fill="none"/><path d="M1 12h10" stroke="#86b0f0" stroke-width="2.400"/><path d="M15 2h10v5H15zM15 10h10v5H15z" fill="#d8e4f4" stroke="#4070d0"/><path d="M15 16h10v9H15z" fill="#fff" stroke="#10108a" stroke-width="1.400"/><text x="20" y="24" text-anchor="middle" font-size="8" font-family="Liberation Serif" font-weight="700">i</text></symbol>
<symbol id="bOy" viewBox="0 0 26 26"><path d="M1 20l4-8 8-3 6 3v9l-8 4z" fill="#e2e2e2" stroke="#888"/><path d="M14 8l6-7 6 0v10l-6 1z" fill="#f6a028" stroke="#d06818"/><path d="M13 7h8v7h-8z" fill="#ffd450" stroke="#d06818"/></symbol>
<symbol id="c2" viewBox="0 0 26 26"><circle cx="11" cy="8" r="6" fill="none" stroke="#111" stroke-width="1.200"/><circle cx="11" cy="8" r=".8" fill="#111"/><path d="M4 24L22 10" stroke="#111" stroke-width="1.400"/><circle cx="5" cy="23" r="2.200" fill="#e02020"/><circle cx="21" cy="11" r="2.200" fill="#e02020"/></symbol>
<symbol id="xyz" viewBox="0 0 26 26"><text x="0" y="9" font-size="10" font-family="Liberation Sans" font-weight="700" fill="#c02030">XYZ=</text><path d="M1 18c5-5 8-3 12 0s8 1 12-2" fill="none" stroke="#111" stroke-width="1.400"/></symbol>
<symbol id="hexc" viewBox="0 0 26 26"><path d="M7 3h12l6 10-6 10H7L1 13z" fill="none" stroke="#111" stroke-width="1.400"/><circle cx="13" cy="13" r="2" fill="#e02020"/></symbol>
<symbol id="poly2" viewBox="0 0 26 26"><path d="M3 14l6-9 6 12 8-9" fill="none" stroke="#555" stroke-width="1.400"/><g fill="#777"><circle cx="3" cy="14" r="2"/><circle cx="23" cy="8" r="2"/><circle cx="9" cy="5" r="2"/></g><circle cx="15" cy="17" r="2.200" fill="#e02020"/></symbol>
<symbol id="ofsC" viewBox="0 0 26 26"><path d="M3 8l6-6 6 4c6-2 10 4 8 9l-3 7H3z" fill="none" stroke="#111" stroke-width="1.300"/><path d="M6 9l3-3 6 4c4-1 6 2 5 5l-3 4H6z" fill="none" stroke="#e03050" stroke-width="1.300"/></symbol>
<symbol id="prj" viewBox="0 0 26 26"><path d="M2 3h7M2 22l6 0M18 3h7M19 20h6" stroke="#111"/><path d="M2 3c-2 5 5 3 5 8s-5 4-5 8M25 3c-3 3-4 7-4 10" fill="none" stroke="#111"/><path d="M9 14l10-5v10l-10 4z" fill="#ecdcf0" stroke="#9060b0"/><path d="M14 6v9l-3 0 4 4 3-4h-3z" fill="#f0a020"/><path d="M3 23l14-3" stroke="#e02020"/></symbol>
<symbol id="wpr" viewBox="0 0 26 26"><path d="M7 3l17 4" stroke="#2040d0" stroke-width="1.800"/><path d="M15 5v8M12 11l3 4 3-4z" stroke="#c01818" fill="#c01818"/><path d="M1 17l13-7 11 7-12 8z" fill="#c0d8f2" stroke="#6a88c0"/><path d="M6 16l10 5M9 14l10 5" stroke="#e86030" stroke-width="1.500"/></symbol>
<symbol id="wpr2" viewBox="0 0 26 26"><path d="M1 11l12-8 11 8-11 9z" fill="#c0d8f2" stroke="#6a88c0"/><path d="M12 1l10 5v19l-10-5z" fill="#d8e4f4" stroke="#6a88c0"/><path d="M6 13l12-7M9 15l12-7" stroke="#e86030" stroke-width="1.500"/></symbol>
<symbol id="check" viewBox="0 0 16 16"><path d="M1 8l4 6h2L15 3l-3-1-6 8-2-3z" fill="#18b030"/></symbol>
<symbol id="tAsm" viewBox="0 0 26 26"><path d="M3 2l6-1v6l-6 1zM9 7l6-1v6l-6 1z" fill="#f6c030" stroke="#c88000"/><path d="M3 9h7v5H3z" fill="#ffd24a"/><path d="M8 14v10M8 19h14" stroke="#10108a" stroke-width="1.200"/><path d="M16 18l5-2 4 2v4l-5 2-4-2z" fill="#f6c030" stroke="#c88000"/></symbol>
<symbol id="tCon" viewBox="0 0 26 26"><path d="M2 4l11 5 11-5v12l-11-5-11 5z" fill="#10108a"/><path d="M13 2v23" stroke="#111" stroke-dasharray="2 1"/><path d="M2 18h8v7H2z" fill="#ffec50" stroke="#222"/><path d="M15 16l8 9h-8z" fill="#c81010"/></symbol>
<symbol id="tPrt" viewBox="0 0 26 26"><ellipse cx="7" cy="5" rx="6" ry="2" fill="#d080b0" stroke="#902060"/><path d="M1 5v7c0 3 12 3 12 0V5" fill="#d080b0" stroke="#902060"/><path d="M15 9h10M7 16v9M7 21h4" stroke="#10108a" stroke-width="1.200"/><circle cx="18" cy="20" r="5" fill="none" stroke="#902060"/><circle cx="18" cy="20" r="2" fill="#902060"/></symbol>
<symbol id="tBook" viewBox="0 0 26 26"><path d="M1 5l6-3v19l-6 3z" fill="#f6a030" stroke="#b06010"/><path d="M7 5h6v19H7z" fill="#38b048" stroke="#1a7028"/><path d="M13 5h6v19h-6z" fill="#3880e0" stroke="#1a50a0"/><path d="M19 5l6-3v19l-6 3z" fill="#2a60c0"/><path d="M1 5l6-3h18l-6 3z" fill="#eee" stroke="#999"/></symbol>
<symbol id="tRss" viewBox="0 0 26 26"><path d="M8 3c9 0 16 7 16 16M8 8c6 0 11 5 11 11" fill="none" stroke="#3f8ae0" stroke-width="2.600"/><circle cx="9" cy="18" r="7.500" fill="#2060d0"/><text x="9" y="22" text-anchor="middle" font-family="Liberation Sans" font-weight="700" font-size="11" fill="#fff">i</text></symbol>
<symbol id="tWeb" viewBox="0 0 26 26"><path d="M4 1h13l6 6v18H4z" fill="#fff" stroke="#4060d0"/><path d="M17 1v6h6" fill="#dde" stroke="#4060d0"/><circle cx="13" cy="16" r="6" fill="#3090c0"/><path d="M9 13c3 0 5 2 5 6-3 2-5-1-5-6zM14 11c3 0 4 2 3 5-2 0-4-2-3-5z" fill="#50b040"/></symbol>
<symbol id="tClk" viewBox="0 0 26 26"><circle cx="13" cy="13" r="12" fill="#8a9098"/><circle cx="13" cy="13" r="10" fill="#f4f8ff" stroke="#556"/><path d="M13 6v7h6" fill="none" stroke="#111" stroke-width="1.600"/></symbol>
<symbol id="tLst" viewBox="0 0 26 26"><path d="M1 6l7-4v22l-7-3z" fill="#d8e0d0" stroke="#555"/><path d="M8 3h17v19H8z" fill="#fff" stroke="#555"/><circle cx="11" cy="7" r="2" fill="#2a70e0"/><circle cx="11" cy="13" r="2" fill="#38a838"/><circle cx="11" cy="19" r="2" fill="#e02020"/><path d="M15 7h8M15 13h8M15 19h8" stroke="#222"/></symbol>
<symbol id="navp" viewBox="0 0 18 18"><path d="M2 12l5-9 6-1 3 3-5 9-6 1z" fill="#e8e020" stroke="#111"/><path d="M5 8l5 5" stroke="#111" fill="none"/></symbol>
<symbol id="trCs" viewBox="0 0 18 18"><path d="M4 15L17 3M4 15l0-13M4 15l14 1" stroke="#555" fill="none"/><path d="M7 9l9 2-6 5z" fill="#ccc" stroke="#888"/><path d="M2 4l2-3 2 3z" fill="#1c2fc0"/><circle cx="12" cy="3" r="1.500" fill="#e02020"/></symbol>
<symbol id="trBk" viewBox="0 0 18 18"><path d="M9 1l8 4v9l-8 4-8-4V5z" fill="#a4bcf4" stroke="#2a3fb0"/><path d="M1 5l8 4 8-4-8-4z" fill="#d0ddfc" stroke="#2a3fb0"/><path d="M9 9l8-4v9l-8 4z" fill="#4468d0"/></symbol>
<symbol id="trEd" viewBox="0 0 18 18"><path d="M1 5l5-3h10l1 3v9l-5 3H2z" fill="#3f6fd8"/><path d="M2 5h11v8H2z" fill="#fff" stroke="#2a3fb0"/><path d="M1 5l5-3h11l-4 3z" fill="#f6a830" stroke="#c06818"/><path d="M2 9h11" stroke="#e02020" stroke-width="1.400"/></symbol>
<symbol id="trHl" viewBox="0 0 18 18"><path d="M1 1h16v4l-3 1v6l-5 6-5-6V6L1 5z" fill="#7c8ac4" stroke="#334"/><path d="M6 1v11l3 6V1z" fill="#26264a"/></symbol>
<symbol id="trVw" viewBox="0 0 18 18"><path d="M9 1l7 4v8l-7 4-7-4V5z" fill="#d8f4e8" stroke="#18a070" stroke-width="1.300"/><path d="M2 5l7 4 7-4M9 9v8M2 13l7-4 7 4M9 1v8" stroke="#18a070" fill="none"/><path d="M8 17l9-5" stroke="#f06020" stroke-width="1.400"/></symbol>
<symbol id="trCam" viewBox="0 0 18 18"><path d="M1 5l5-4h11v11l-5 5H1z" fill="#f4a0b0" stroke="#c03050"/><path d="M3 6h9v9H3z" fill="#eee" stroke="#c03050"/><circle cx="9" cy="9" r="3.500" fill="#7090e0" stroke="#223"/></symbol>
<symbol id="trFld" viewBox="0 0 18 18"><path d="M1 5V3h6l2 2h7v3H1z" fill="#d8a820" stroke="#7a5a10"/><path d="M1 16l3-9h13l-3 9z" fill="#ffe070" stroke="#7a5a10"/></symbol>
<symbol id="lcup" viewBox="0 0 26 26"><path d="M2 14l11-5 11 5-11 6z" fill="#fff" stroke="#333"/><path d="M2 14v6l11 5 11-5v-6l-11 6z" fill="#e8e0d0" stroke="#333"/><path d="M13 20v5" stroke="#333"/><path d="M8 4h10v9c-2 2-8 2-10 0z" fill="#f02010"/><path d="M11 5h4v9h-4z" fill="#ffcc30"/><ellipse cx="13" cy="4" rx="5" ry="2" fill="#ff8a50" stroke="#c01000"/></symbol>
<symbol id="ptBtn" viewBox="0 0 26 26"><path d="M15 3v9M10 8h10" stroke="#111" stroke-width="1.200"/><path d="M3 15c1 4 5 5 8 4M3 15l3-2v4z" stroke="#e86020" fill="none" stroke-width="1.500"/><path d="M14 21h2M18 21h2M22 21h2" stroke="#222" stroke-width="2"/></symbol>
<symbol id="plBtn" viewBox="0 0 26 26"><path d="M8 5l13-3 1 12-13 3z" fill="#eaeaea" stroke="#222"/><path d="M3 14c1 4 5 5 8 4M3 14l3-2v4z" stroke="#e86020" fill="none" stroke-width="1.500"/><path d="M15 21h2M19 21h2M23 21h2" stroke="#222" stroke-width="2"/></symbol>
<symbol id="ptTyp" viewBox="0 0 26 26"><path d="M3 3h14v9M8 12h14M15 12v9" stroke="#b020b0" stroke-width="1.500" fill="none"/><path d="M11 18h8l-4 5z" fill="#b020b0"/><path d="M9 23h12" stroke="#b020b0"/></symbol>
<symbol id="plTyp" viewBox="0 0 26 26"><path d="M2 12l10-8v14L2 25z" fill="#eef4ee" stroke="#111"/><path d="M2 25L2 4" stroke="#2040c0" stroke-width="1.400"/><path d="M2 25l20-9" stroke="#18a030" stroke-width="1.400"/><path d="M2 25l18 1" stroke="#d02020" stroke-width="1.400"/></symbol>
<symbol id="gear" viewBox="0 0 18 18"><circle cx="9" cy="9" r="3.500" fill="none" stroke="#fff" stroke-width="2.400"/><circle cx="9" cy="9" r="6.500" fill="none" stroke="#fff" stroke-width="2.400" stroke-dasharray="2.600 2.500"/></symbol>
<symbol id="back" viewBox="0 0 18 18"><path d="M7 14c6 1 8-7 3-10" fill="none" stroke="#fff" stroke-width="2.400"/><path d="M12 1l-1 7-5-4z" fill="#fff"/></symbol>
<symbol id="closeX" viewBox="0 0 18 18"><path d="M4 4l10 10M14 4L4 14" stroke="#fff" stroke-width="3"/></symbol>
</defs>
</svg>

<div class="app">
<div class="blackTop"></div>
<header class="title">
<svg class="logo"><use href="#globe"/></svg>
<span class="titleText">NX 12.0.0.27 - 建模</span>
<span class="siemens">SIEMENS</span>
<span class="wbtn wb18"><span class="wmin"></span></span>
<span class="wbtn"><span class="wmax"></span></span>
<span class="wbtn wb18 wclose">✕</span>
</header>

<nav class="menu">
<i class="grip gm"></i>
<svg class="gripL"><use href="#nxm"/></svg>
<span class="mi">文件 <small>(F)</small></span><span class="mi">编辑 <small>(E)</small></span><span class="mi">视图 <small>(V)</small></span><span class="mi">插入 <small>(S)</small></span><span class="mi">格式 <small>(R)</small></span><span class="mi">工具 <small>(T)</small></span><span class="mi">装配 <small>(A)</small></span><span class="mi">信息 <small>(I)</small></span><span class="mi">分析 <small>(L)</small></span><span class="mi mi3">首选项 <small>(P)</small></span><span class="mi miw">窗口 <small>(O)</small></span><span class="mi mig"><small>GC</small> 工具箱</span><span class="mi">帮助 <small>(H)</small></span>
<span class="mdi"><span class="mbtn">▁</span><span class="mbtn">❐</span><span class="mbtn">✕</span></span>
</nav>

<div class="tb r1">
<i class="grip"></i>
<svg class="b ml1"><use href="#globe"/></svg><span class="tt">开始</span><i class="a"></i>
<svg class="b ml1"><use href="#doc"/></svg><svg class="b"><use href="#openf"/></svg><svg class="b"><use href="#save"/></svg>
<i class="sep ml2"></i>
<svg class="b ml1"><use href="#cut"/></svg><svg class="b"><use href="#copy"/></svg><svg class="b ml1"><use href="#paste"/></svg>
<i class="sep ml3"></i>
<svg class="b"><use href="#undo"/></svg><svg class="b"><use href="#redo"/></svg>
<i class="sep ml3"></i>
<svg class="b ml1"><use href="#bino"/></svg><span class="tt ml1 w60">命令查找器</span>
<svg class="b ml5"><use href="#role"/></svg><i class="a"></i>
<i class="sep ml2"></i>
<svg class="b"><use href="#info"/></svg><i class="a low"></i>
<i class="sep ml2"></i>
<i class="grip"></i>
<svg class="b"><use href="#fit"/></svg><i class="a"></i><svg class="b"><use href="#fit"/></svg><svg class="b"><use href="#zrect"/></svg><svg class="b"><use href="#zin"/></svg><svg class="b"><use href="#pan"/></svg><svg class="b"><use href="#rot"/></svg><svg class="b"><use href="#cam"/></svg><i class="a"></i><svg class="b"><use href="#cS"/></svg><i class="a"></i><svg class="b"><use href="#cS"/></svg><svg class="b"><use href="#cR"/></svg><svg class="b"><use href="#cW"/></svg><svg class="b"><use href="#cW"/></svg><svg class="b"><use href="#cW2"/></svg><svg class="b"><use href="#cW3"/></svg>
<span class="ch"><b>»</b><i class="a"></i></span>
</div>

<div class="tb r2">
<i class="grip"></i>
<svg class="b"><use href="#sheet"/></svg><i class="a"></i>
<svg class="b"><use href="#ext"/></svg><svg class="b"><use href="#rev"/></svg><svg class="b"><use href="#hole"/></svg><svg class="b"><use href="#boss"/></svg><svg class="b"><use href="#patch"/></svg>
<i class="sep ml3"></i>
<svg class="b ml1"><use href="#emb"/></svg><svg class="b"><use href="#pat"/></svg><svg class="b"><use href="#off"/></svg><svg class="b"><use href="#unite"/></svg><i class="a ml1"></i>
<svg class="b"><use href="#trim"/></svg><svg class="b"><use href="#rib"/></svg><svg class="b"><use href="#sw"/></svg><svg class="b"><use href="#cut2"/></svg><svg class="b"><use href="#shell"/></svg><svg class="b"><use href="#mir"/></svg>
<i class="sep ml3"></i>
<svg class="b"><use href="#blk"/></svg><svg class="b"><use href="#sfold"/></svg><svg class="b"><use href="#sfold"/></svg><svg class="b"><use href="#sbox"/></svg>
<span class="ch ml21"><b>»</b><i class="a"></i></span>
<i class="sep"></i><i class="grip"></i>
<svg class="b ml1"><use href="#pMove"/></svg><i class="a"></i><svg class="b"><use href="#pTri"/></svg><i class="a"></i><svg class="b ml1"><use href="#pX"/></svg><svg class="b"><use href="#pDoc"/></svg><i class="a"></i>
<span class="ch ml13"><b>»</b><i class="a"></i></span>
<i class="sep"></i><i class="grip"></i>
<svg class="b"><use href="#sA"/></svg><svg class="b"><use href="#sB"/></svg><svg class="b"><use href="#sC"/></svg>
<span class="ch ml6"><b>»</b><i class="a"></i></span>
</div>

<div class="tb r3">
<i class="grip"></i>
<svg class="b ml1"><use href="#bsel"/></svg><svg class="b"><use href="#lay"/></svg><svg class="b"><use href="#layL"/></svg>
<i class="sep ml3"></i><svg class="b"><use href="#tag"/></svg><i class="sep ml3"></i>
<svg class="b"><use href="#chkB"/></svg><svg class="b"><use href="#chkY"/></svg>
<span class="ch ml13"><b>»</b><i class="a"></i></span>
<i class="sep"></i><i class="grip"></i>
<svg class="b"><use href="#bl1"/></svg><svg class="b"><use href="#bl2"/></svg><svg class="b"><use href="#ihand"/></svg><i class="a low"></i>
<i class="sep ml2"></i><i class="grip"></i>
<svg class="b ml1"><use href="#coil"/></svg><svg class="b"><use href="#sprg"/></svg><svg class="b"><use href="#wash"/></svg>
<i class="sep ml2"></i>
<svg class="b"><use href="#spx"/></svg><i class="a low"></i>
<i class="sep ml2"></i><i class="grip"></i>
<svg class="b ml1"><use href="#tri"/></svg><svg class="b"><use href="#tbl"/></svg><svg class="b"><use href="#fx"/></svg><svg class="b"><use href="#fo"/></svg><i class="a low"></i>
<i class="sep ml2"></i><i class="grip"></i>
<svg class="b"><use href="#lk1"/></svg><svg class="b"><use href="#lk1"/></svg><i class="a low"></i>
<i class="sep ml2"></i><i class="grip"></i>
<svg class="b ml1"><use href="#layL"/></svg><svg class="b"><use href="#cs"/></svg><i class="a"></i>
<i class="sep ml2"></i>
<svg class="b"><use href="#hd"/></svg><svg class="b"><use href="#pal"/></svg>
<i class="sep ml3"></i>
<svg class="b ml1"><use href="#play"/></svg><i class="a"></i>
<i class="sep ml2"></i>
<svg class="b ml1"><use href="#hatch"/></svg><i class="a"></i>
<svg class="b ml2"><use href="#dim"/></svg><i class="a low mlm1"></i>
</div>

<div class="tb r4">
<div class="r4blank"></div>
<i class="grip"></i>
<svg class="b"><use href="#skt"/></svg><svg class="b"><use href="#flag"/></svg><span class="tt off w48 mlm1">完成草图</span>
<svg class="b ml5"><use href="#crv"/></svg><svg class="b"><use href="#ln"/></svg><svg class="b"><use href="#arc"/></svg><svg class="b"><use href="#circ"/></svg><svg class="b"><use href="#fil"/></svg><svg class="b"><use href="#chm"/></svg><svg class="b"><use href="#rct"/></svg>
<svg class="b ml2"><use href="#poly"/></svg><svg class="b"><use href="#plus"/></svg><svg class="b"><use href="#ofs"/></svg><i class="a"></i>
<i class="sep ml1"></i>
<svg class="b"><use href="#ers1"/></svg><svg class="b"><use href="#ers2"/></svg><svg class="b"><use href="#trm"/></svg>
<i class="sep ml3"></i>
<svg class="b ml1"><use href="#dgr"/></svg><i class="a"></i>
<i class="sep ml4"></i>
<svg class="b"><use href="#par"/></svg><svg class="b"><use href="#bkt"/></svg><svg class="b"><use href="#pp"/></svg><i class="a"></i>
<i class="sep ml4"></i>
<svg class="b"><use href="#gpen"/></svg><svg class="b"><use href="#glk"/></svg><svg class="b"><use href="#gbox"/></svg><i class="a low mlm1"></i>
</div>

<div class="tb sel">
<span class="combo c1"><span class="comboT">没有选择过滤器</span><i class="cb"></i></span>
<span class="combo c2"><span class="comboT">仅在工作部件内</span><i class="cb"></i></span>
<svg class="s ml7"><use href="#fltG"/></svg>
<i class="sep"></i>
<svg class="s ml2"><use href="#funG"/></svg><svg class="s"><use href="#funR"/></svg><i class="a w10"></i>
<svg class="s ml1"><use href="#rtg"/></svg><svg class="s"><use href="#gHam"/></svg>
<i class="sep ml3"></i>
<svg class="s"><use href="#selr"/></svg><i class="a"></i>
<i class="sep ml5"></i>
<svg class="s"><use href="#box1"/></svg><svg class="s ml3"><use href="#box2"/></svg>
<i class="sep ml1"></i>
<svg class="s box ml4"><use href="#s1"/></svg><svg class="s"><use href="#s2"/></svg>
<svg class="s box ml2"><use href="#ln"/></svg><svg class="s box ml1"><use href="#lnm"/></svg><svg class="s"><use href="#crv2"/></svg><svg class="s ml2"><use href="#tang"/></svg><svg class="s box ml1"><use href="#cc"/></svg><svg class="s"><use href="#c4"/></svg><svg class="s box ml1"><use href="#plr"/></svg><svg class="s"><use href="#lnm"/></svg><svg class="s ml2"><use href="#fac"/></svg>
<i class="a low endA"></i>
</div>

<div class="status">
<span class="st1">选择要镜像的特征</span>
<span class="st2">2 个对象 已选定</span>
<span class="st3"></span><span class="st4"></span>
<svg class="stI"><use href="#flag"/></svg>
<svg class="stI ml3 stW"><use href="#wnd"/></svg>
</div>

<main class="main">
<aside class="left">
<div class="tabs">
<div class="tab t1"><svg><use href="#tAsm"/></svg></div>
<div class="tab t2"><svg><use href="#tCon"/></svg></div>
<div class="tab t3 on"><svg><use href="#tPrt"/></svg></div>
<div class="tab t4"><svg><use href="#tBook"/></svg></div>
<div class="tab t5"><svg><use href="#tRss"/></svg></div>
<div class="tab t6"><svg><use href="#tWeb"/></svg></div>
<div class="tab t7"><svg><use href="#tClk"/></svg></div>
<div class="tab t8"><svg><use href="#tLst"/></svg></div>
<i class="wave"></i>
<span class="sb">⏶</span><span class="sb">▲</span><span class="sb">▼</span><span class="sb">⏷</span>
</div>
<div class="nav">
<div class="navHead"><svg class="navI"><use href="#navp"/></svg><span class="navT">部件导航器</span></div>
<div class="tree">
<div class="thead"><span>名称</span><i class="sortUp"></i></div>
<div class="r r1c"><svg class="ti c71"><use href="#tClk"/></svg><span class="rt">历史记录模式</span></div>
<div class="r r1c"><i class="pm">+</i><svg class="ti c69"><use href="#trVw"/></svg><span class="rt">模型视图</span></div>
<div class="r r1c"><i class="pm">+</i><svg class="ck ml62"><use href="#check"/></svg><svg class="ti"><use href="#trCam"/></svg><span class="rt t98">摄像机</span></div>
<div class="r r1c"><i class="pm">+</i><svg class="ti c71b"><use href="#trFld"/></svg><span class="rt">用户表达式</span></div>
<div class="r r1c r1e"><i class="pm">−</i><svg class="ti c71b"><use href="#trFld"/></svg><span class="rt">模型历史记录</span></div>
<div class="r r2c"><i class="cbx"><svg><use href="#check"/></svg></i><svg class="ti"><use href="#trCs"/></svg><span class="rt2 dim">基准坐标系</span></div>
<div class="r r2c"><i class="cbx"><svg><use href="#check"/></svg></i><svg class="ti"><use href="#trBk"/></svg><span class="rt2">块 (18)</span></div>
<div class="r r2c"><i class="cbx"><svg><use href="#check"/></svg></i><svg class="ti"><use href="#trEd"/></svg><span class="rt2">边倒圆 (19)</span></div>
<div class="r r2c"><i class="cbx"><svg><use href="#check"/></svg></i><svg class="ti"><use href="#trHl"/></svg><span class="rt2 sl">沉头孔 (20)</span></div>
<div class="r r2c r2e"><i class="cbx"><svg><use href="#check"/></svg></i><svg class="ti"><use href="#mir"/></svg><span class="rt2 sl wide">镜像特征</span></div>
<div class="r"></div><div class="r"></div><div class="r"></div><div class="r"></div><div class="r"></div>
<div class="hs"><i class="hsb">‹</i><i class="hsThumb"></i></div>
</div>
<div class="split"><i class="grab"></i></div>
<div class="acc"><span>相依性</span><i class="chv dn"></i></div>
<div class="acc"><span>细节</span><i class="chv dn"></i></div>
<div class="acc"><span>预览</span><i class="chv dn"></i></div>
<div class="hs2"><i class="hsb">‹</i><i class="hsThumb2"></i><i class="hsb">›</i></div>
</div>
</aside>

<section class="canvas">
<svg class="scene" viewBox="198 253 826 466" aria-label="3D model">
<defs><g id="bore"><ellipse cx="722" cy="363" rx="24" ry="16" fill="url(#gBore)" stroke="#553322" stroke-dasharray="2 1"/><ellipse cx="722" cy="369" rx="19" ry="10" fill="#f5a850"/><ellipse cx="722" cy="370" rx="16" ry="8" fill="#fbd9a8"/><ellipse cx="722" cy="372" rx="12" ry="6" fill="#e8a050"/></g></defs>
<path d="M467 505L472 540Q475 546 482 550L657 675Q685 691 715 683Q735 677 752 660L817 610L932 536Q946 525 947 510Q947 498 943 487z" fill="url(#gSide)" stroke="#222" stroke-width=".8"/>
<path d="M477 525l4 27M653 648l5 27M721 648l3 33M929 510l3 27" stroke="#333" stroke-width=".8"/>
<path d="M482 483L697 342Q712 335 733 336Q745 337 755 343L933 467Q945 476 943 487Q941 500 927 510L722 646Q705 658 685 657Q668 656 653 648L477 525Q466 515 467 503Q469 492 482 483Z" fill="#ffcc00" stroke="#333" stroke-width="1"/>
<use href="#bore"/>
<ellipse cx="723" cy="374" rx="8" ry="4" fill="#5a6030"/><path d="M718 377l5 4 5-4z" fill="#666"/>
<use href="#bore" x="177" y="127"/>
<path d="M895 499l6-3 6 3-1 6-5 3-5-3z" fill="#c8e050" stroke="#a0c040" stroke-width=".5"/>
<path d="M748 448L655 508L658 527L751 467Z" fill="#cabb24"/>
<path d="M748 448L655 508L670 598L763 538Z" fill="none" stroke="#08a0b0" stroke-width="1.600"/>
<path d="M702 484l-3 10 5 30 3-1-1-30z" fill="#1030c0"/>
<path d="M707 521l33-21 10-3-8 7z" fill="#d8f0d8" stroke="#90b070" stroke-width=".4"/>
<path d="M710 526l28 17 6 5-9-2-29-20z" fill="#f0a8c8"/>
<path d="M705 520l7 3-1 6-6 0-4-4z" fill="#b89048"/>
<text x="705" y="483" class="lz">ZC</text>
<text x="735" y="492" class="ly">YC</text>
<text x="727" y="560" class="lx">XC</text>
<path d="M241 658L252 652L263 658L263 671L252 678L241 671Z" fill="#d6d6d6" stroke="#b4b4b4"/>
<path d="M241 658l11 7 11-7M252 665v13M241 671l11-6 11 6M252 652v13" fill="none" stroke="#c4c4c4"/>
<path d="M243 670l20-10" stroke="#a8c8a8"/>
<path d="M240 673l-2-20" stroke="#1030c0" stroke-width="2.400"/>
<path d="M240 673l19 12" stroke="#d02020" stroke-width="2"/>
<circle cx="240" cy="673" r="3" fill="#ccc" stroke="#888"/>
<text x="233" y="652" class="mz">Z</text><text x="262" y="661" class="my">Y</text><text x="258" y="692" class="mx">X</text>
</svg>
</section>

<section class="dialog">
<div class="dTitle"><svg class="dGear"><use href="#gear"/></svg><span class="dName">镜像特征</span><span class="dCtl"><svg><use href="#back"/></svg></span><span class="dCtl"><svg><use href="#closeX"/></svg></span></div>
<div class="dBody">
<div class="sec"><span>要镜像的特征</span><i class="chv up"></i></div>
<div class="sb1"><div class="hl orange"><svg class="ck2"><use href="#check"/></svg><span>选择特征 (2)</span></div><span class="picked"><svg><use href="#lcup"/></svg></span></div>
<div class="sec"><span>参考点</span><i class="chv up"></i></div>
<div class="sb1"><div class="hl plain"><svg class="ck2"><use href="#check"/></svg><span>指定点</span></div><span class="pt"><svg><use href="#ptBtn"/></svg></span><span class="sp"><svg><use href="#ptTyp"/></svg><i class="cb2"></i></span></div>
<div class="sec"><span>镜像平面</span><i class="chv up"></i></div>
<div class="sb2">
<div class="planeRow"><span class="plabel">平面</span><span class="combo c3"><span class="comboT">新平面</span><i class="cb"></i></span></div>
<div class="hlRow"><div class="hl blue"><svg class="ck2"><use href="#check"/></svg><span>指定平面</span></div><span class="pt"><svg><use href="#plBtn"/></svg></span><span class="sp xc"><svg><use href="#plTyp"/></svg><b>XC</b><i class="cb2"></i></span></div>
</div>
<div class="sec"><span>源特征的可重用引用</span><i class="chv dn"></i></div>
<div class="sec"><span>设置</span><i class="chv dn"></i></div>
<div class="sec"><span>预览</span><i class="chv dn"></i></div>
<div class="rule"></div>
<div class="actions"><span class="btn">确定</span><span class="btn go">应用</span><span class="btn">取消</span></div>
</div>
<div class="dFoot"></div>
<svg class="cursor" viewBox="0 0 14 22"><path d="M1 1v16l4-3 3 7 3-1-3-7h5z" fill="#fff" stroke="#111"/></svg>
</section>
</main>

<div class="tb bot">
<i class="grip"></i>
<svg class="b"><use href="#fndC"/></svg><i class="a"></i>
<svg class="b"><use href="#asm"/></svg><svg class="b"><use href="#stk"/></svg><svg class="b"><use href="#cplus"/></svg><i class="a"></i>
<svg class="b"><use href="#cmv"/></svg><svg class="b"><use href="#mrr"/></svg><svg class="b"><use href="#pp2"/></svg>
<i class="sep ml3"></i>
<svg class="b"><use href="#gJoint"/></svg><svg class="b ml1"><use href="#c3y"/></svg><svg class="b"><use href="#wab"/></svg>
<i class="sep ml2"></i>
<svg class="b"><use href="#hex"/></svg>
<i class="sep ml3"></i>
<svg class="b ml4"><use href="#lnk"/></svg><svg class="b"><use href="#lnkW"/></svg><svg class="b"><use href="#nav"/></svg>
<i class="sep ml3"></i>
<svg class="b mlm2"><use href="#bOy"/></svg><i class="a"></i><i class="a low"></i>
<i class="sep ml1"></i><i class="grip"></i>
<svg class="b"><use href="#ln"/></svg><i class="a"></i>
<svg class="b"><use href="#c2"/></svg><svg class="b"><use href="#rct"/></svg><svg class="b"><use href="#xyz"/></svg><svg class="b"><use href="#hexc"/></svg><svg class="b"><use href="#ln"/></svg><svg class="b"><use href="#arc"/></svg><svg class="b"><use href="#poly2"/></svg><svg class="b"><use href="#ofsC"/></svg><svg class="b"><use href="#prj"/></svg><svg class="b"><use href="#wpr"/></svg><svg class="b"><use href="#wpr2"/></svg><i class="a low"></i>
<i class="sep ml2"></i>
</div>
<div class="blackBot"></div>
</div>
</body>
</html>
```
FILE: styles.css
```css
*{box-sizing:border-box}
html,body{margin:0;padding:0;background:#000}
body{font:12px "Noto Sans CJK SC","Liberation Sans",sans-serif;color:#111;width:1024px;height:768px;overflow:hidden}
i{font-style:normal}
.defs{position:absolute;width:0;height:0}
.app{display:flex;flex-direction:column;width:1024px;height:768px}
.blackTop{height:18px;background:#000;flex:none}
.blackBot{height:18px;background:#000;flex:none}
.title{flex:none;height:27px;display:flex;align-items:flex-end;padding:0 7px 2px 7px;background:linear-gradient(#7a7a7a 0,#4a4a4a 9px,#141414 9px,#0c0c0c 100%);border-radius:3px 3px 0 0;color:#fff}
.logo{width:17px;height:17px;flex:none}
.titleText{font:13px/18px "DejaVu Sans","Noto Sans CJK SC",sans-serif;margin-left:3px;letter-spacing:-.1px}
.siemens{margin-left:auto;font:700 12px/16px "Liberation Sans",sans-serif;letter-spacing:1px;margin-right:23px;margin-bottom:-1px}
.wbtn{width:20px;height:19px;margin:0 0 0 3px;background:linear-gradient(#6a6a6a,#2c2c2c);border:1px solid #888;border-radius:3px;display:flex;align-items:center;justify-content:center;font:13px/1 "DejaVu Sans",sans-serif;color:#fff}
.wb18{width:18px}
.wmin{width:7px;height:3px;background:#fff;margin-top:8px;margin-left:-2px}
.wmax{width:11px;height:11px;border:1px solid #fff;border-top-width:2px}
.wclose{background:linear-gradient(#f07050,#d03010);border-color:#d88;font-weight:700}
.menu{flex:none;height:23px;display:flex;align-items:center;background:linear-gradient(#efefef,#dedede);padding:0 0 2px 0;font-size:12px;border-bottom:1px solid #c8c8c8}
.gm{height:16px;margin-left:4px}
.gripL{width:16px;height:16px;flex:none;margin:0 7px 0 1px}
.mi{width:55px;white-space:nowrap;flex:none;color:#111}
.mi3{width:67px}.miw{width:54px}.mig{width:68px}
.mi small{font:10px "Liberation Sans",sans-serif}
.mdi{margin-left:auto;display:flex;gap:2px;padding-right:4px}
.mbtn{width:17px;height:17px;border:1px solid #777;border-radius:3px;background:linear-gradient(#f4f4f4,#c8c8c8);font:700 11px/15px "DejaVu Sans",sans-serif;color:#555;text-align:center}
.tb{flex:none;display:flex;align-items:center;background:linear-gradient(#f0f0f0,#dcdcdc);padding-left:1px;border-bottom:1px solid #b4b4b4;overflow:hidden}
.r1{height:33px}.r2{height:35px}.r3{height:34px}.r4{height:33px}
.sel{height:29px;background:linear-gradient(#e0e0e0,#d4d4d4);padding-left:6px}
.bot{height:31px;border:0;padding-left:1px}
.r4{background:#d6d6d6;padding-left:0}
.r4blank{width:208px;height:100%;flex:none;background:#d4d4d4;border-right:2px solid #f4f4f4}
.grip{width:3px;height:24px;margin-left:3px;flex:none;background-image:radial-gradient(circle,#999 1px,transparent 1.200px);background-size:3px 4px}
.b{width:31px;height:26px;flex:none}
.s{width:22px;height:21px;flex:none;padding:0 1px}
.box{background:#fff;border:1px solid #777;border-radius:3px;width:22px;height:22px}
.tt{flex:none;width:23px;font-size:12px;white-space:nowrap;color:#111}
.w60{width:60px}.w48{width:48px}
.off{color:#9a9a9a}
.a{width:12px;height:6px;flex:none;position:relative}
.a::before{content:"";position:absolute;left:3px;top:1px;border:3px solid transparent;border-top:4px solid #111;border-bottom:0}
.a.low{align-self:flex-end;margin-bottom:4px}
.w10{width:10px}
.endA{margin-left:auto;margin-right:3px}
.sep{width:2px;height:100%;flex:none;background:linear-gradient(90deg,#bababa 50%,#fff 50%)}
.ml1{margin-left:1px}.ml2{margin-left:2px}.ml3{margin-left:3px}.ml4{margin-left:4px}.ml5{margin-left:5px}.ml6{margin-left:6px}.ml7{margin-left:7px}.ml13{margin-left:13px}.ml21{margin-left:21px}.mlm1{margin-left:-1px}.mlm2{margin-left:-2px}
.ch{flex:none;width:16px;height:100%;display:flex;flex-direction:column;align-items:center;justify-content:space-between;padding:2px 0 5px}
.ch b{font:700 13px/12px "DejaVu Sans",sans-serif}
.combo{height:19px;display:flex;align-items:center;background:#fff;border:1px solid #777;border-radius:4px;flex:none;overflow:hidden}
.comboT{flex:1;padding-left:2px;white-space:nowrap;font-size:12px}
.c1{width:109px}.c2{width:115px;margin-left:9px}
.c3{width:105px;height:18px;margin-left:auto}
.cb{width:16px;height:100%;flex:none;background:linear-gradient(#bcd8f8,#3a88e0);position:relative}
.cb::after{content:"";position:absolute;left:3px;top:6px;border:5px solid transparent;border-top:5px solid #111;border-bottom:0}
.status{flex:none;height:21px;display:flex;align-items:center;background:#dadada;font-weight:700;font-size:12px;border-bottom:1px solid #888}
.st1{width:464px;padding-left:3px;height:100%;border-right:2px solid #f4f4f4;line-height:19px}
.st2{width:461px;padding-left:2px;height:100%;line-height:19px;white-space:pre;word-spacing:6px}
.st3{width:21px;height:100%;border-left:2px solid #f4f4f4}
.st4{width:36px;height:100%;border-left:2px solid #f4f4f4}
.stI{width:16px;height:16px;flex:none;margin-left:3px}
.stW{margin-left:6px;width:14px;height:14px}
.main{flex:none;height:466px;display:flex;position:relative;background:#fff}
.left{width:198px;display:flex;flex:none;background:#f0f0f0;border-right:1px solid #8a8a8a}
.tabs{width:42px;flex:none;display:flex;flex-direction:column;align-items:flex-start;background:linear-gradient(90deg,#a8a8a8 33px,#efefef 33px);padding:19px 0 0 6px}
.tab{width:27px;background:linear-gradient(90deg,#fafafa,#d8d8d8);border:1px solid #8a8a8a;border-right:0;border-radius:4px 0 0 4px;display:flex;align-items:center;justify-content:center;flex:none;height:40px;margin-bottom:2px}
.tab svg{width:24px;height:24px;flex:none}
.t1{height:39px}
.t2{margin-bottom:1px}
.tab.on{width:38px;margin-left:-2px;background:#f2f2f2;height:42px;margin-bottom:1px}
.t4{margin-bottom:15px}
.t5{height:39px;margin-bottom:16px}
.t6{height:38px;margin-bottom:15px}
.t7{height:38px;margin-bottom:4px}
.t8{height:39px;margin-bottom:0}
.wave{display:block;width:27px;height:3px;border-top:2px dotted #777;margin:3px 0 4px 0}
.sb{width:16px;height:14px;margin:0 0 2px 4px;background:linear-gradient(#f2f2f2,#ccc);border:1px solid #aaa;font:9px/12px "DejaVu Sans",sans-serif;text-align:center;color:#666;overflow:hidden}
.nav{width:155px;flex:none;display:flex;flex-direction:column;align-items:stretch}
.navHead{height:33px;flex:none;display:flex;align-items:center;padding-left:6px}
.navI{width:16px;height:16px;flex:none}
.navT{font-weight:700;margin-left:8px;font-size:12px}
.tree{width:148px;height:327px;flex:none;border:1px solid #777;background:#fff;overflow:hidden;position:relative}
.thead{height:15px;background:linear-gradient(#fff,#dcdcdc);display:flex;align-items:center;padding-left:7px;border-bottom:1px solid #aaa;font-size:12px;line-height:14px}
.sortUp{margin-left:14px;border:5px solid transparent;border-bottom:5px solid #222;border-top:0}
.r{height:20px;display:flex;align-items:center;border-bottom:1px solid #eaeaea;position:relative;padding-left:5px;white-space:nowrap;font-size:12px;flex:none}
.r1c::before{content:"";position:absolute;left:9px;top:0;bottom:0;border-left:1px dotted #888}
.r1e::before{bottom:10px}
.thead + .r1c::before{top:10px}
.r2c::before{content:"";position:absolute;left:29px;top:0;bottom:0;border-left:1px dotted #888}
.r2e::before{bottom:10px}
.r2c::after{content:"";position:absolute;left:30px;width:10px;top:10px;border-top:1px dotted #888}
.pm{width:9px;height:9px;border:1px solid #888;background:#fff;font:9px/7px "DejaVu Sans",sans-serif;text-align:center;position:relative;flex:none}
.ti{width:18px;height:18px;flex:none;position:relative;z-index:1}
.c71{margin-left:13px}.c69{margin-left:3px}.c71b{margin-left:4px}
.ck{width:15px;height:15px;flex:none}.ml62{margin-left:6px}
.rt{margin-left:3px}.t98{margin-left:2px}
.cbx{width:13px;height:13px;background:#fff;border:1px solid #222;margin-left:35px;flex:none;position:relative;z-index:1;display:flex}
.cbx svg{width:11px;height:11px}
.rt2{padding:0 2px;line-height:19px;word-spacing:4px}
.dim{color:#a0a0a0}
.sl{background:#3a6cc0;color:#fff;height:19px}
.wide{padding-right:20px}
.hs{position:absolute;left:0;right:0;bottom:0;height:18px;display:flex;align-items:center;background:#f4f2ec;padding-left:1px}
.hsb{width:16px;height:15px;border:1px solid #8cb0e8;background:linear-gradient(#d8e6fb,#b8cffa);color:#234;font:700 11px/12px "DejaVu Sans",sans-serif;text-align:center;border-radius:2px;flex:none}
.hsThumb{width:48px;height:15px;border:1px solid #8cb0e8;background:linear-gradient(#d8e6fb,#b8cffa);margin-left:2px;border-radius:2px}
.split{height:13px;flex:none;display:flex;align-items:center;padding-left:62px}
.grab{width:22px;height:6px;background:#d8d8d8;border:1px solid #aaa}
.acc{height:23px;width:146px;flex:none;display:flex;align-items:center;justify-content:space-between;background:linear-gradient(#fafafa,#ececec 50%,#c8c8c8);border-bottom:1px solid #999;font-weight:700;font-size:12px;padding:0 0 1px 7px}
.chv{width:19px;height:100%;flex:none;border-left:1px solid #bbb;position:relative}
.chv::before{content:"";position:absolute;left:4px;width:8px;height:8px;border:solid #666;border-width:3px 3px 0 0}
.chv.dn::before{top:3px;transform:rotate(135deg)}
.chv.up::before{top:8px;transform:rotate(-45deg)}
.hs2{width:146px;height:18px;flex:none;display:flex;align-items:center;justify-content:space-between;margin-top:1px}
.hsThumb2{flex:1;margin:0 4px 0 2px;height:16px;border:1px solid #8cb0e8;background:linear-gradient(#d8e6fb,#b8cffa);border-radius:2px}
.canvas{flex:1;min-width:0}
.scene{display:block;width:826px;height:466px}
.lz,.ly,.lx{font:12px "Liberation Sans",sans-serif}
.lz{fill:#2040e0}.ly{fill:#50a020}.lx{fill:#e03030}
.mz,.my,.mx{font:11px "Liberation Sans",sans-serif}
.mz{fill:#1030c0}.my{fill:#50b050}.mx{fill:#d02020}
.dialog{position:absolute;left:166px;top:0;width:290px;height:375px;background:#eeeeee;display:flex;flex-direction:column;border-radius:0 0 6px 6px;border-right:1px solid #888;border-left:1px solid #888}
.dTitle{height:20px;margin-top:2px;flex:none;background:linear-gradient(#333,#000 40%,#000);display:flex;align-items:center;color:#fff}
.dGear{width:20px;height:18px;flex:none;border-right:2px solid #555}
.dName{flex:1;font-weight:700;margin-left:9px;font-size:12px;padding-bottom:2px}
.dCtl{width:22px;height:100%;border-left:1px solid #666;flex:none;display:flex;align-items:center;justify-content:center}
.dCtl svg{width:18px;height:18px}
.dBody{flex:1;display:flex;flex-direction:column;padding:5px 5px 0 6px;align-items:stretch;min-height:0}
.sec{height:22px;flex:none;display:flex;align-items:center;justify-content:space-between;background:linear-gradient(#fbfbfb,#f0f0f0 50%,#cfcfcf);font-weight:700;padding:0 0 0 6px;margin-bottom:1px;font-size:12px}
.sec > span{padding-bottom:3px}
.sec .chv{width:22px}
.sec .chv::before{left:6px}
.sb1{height:48px;flex:none;background:#c8c8c8;border:1px solid #a0a0a0;border-width:1px 1px 0;display:flex;align-items:center;padding:0 9px 3px 7px;margin-top:-1px}
.sb2{height:70px;flex:none;background:#c8c8c8;border:1px solid #a0a0a0;border-width:1px 1px 0;padding:6px 9px 0 7px;margin-top:-1px;display:flex;flex-direction:column}
.planeRow{display:flex;align-items:center;height:18px;flex:none;padding-right:1px}
.plabel{padding-bottom:2px}
.hlRow{display:flex;align-items:center;margin-top:5px;height:31px;flex:none}
.hl{flex:1;height:31px;border-radius:6px;display:flex;align-items:center;padding-left:2px;white-space:nowrap;min-width:0}
.hl span{margin-left:3px;word-spacing:4px;padding-bottom:2px}
.orange{background:linear-gradient(90deg,#e0a468,#d0c0ae 85%,#c8c8c8)}
.plain{background:transparent}
.blue{background:linear-gradient(90deg,#90bce0,#c8c8c8 88%)}
.ck2{width:15px;height:15px;flex:none}
.picked{width:30px;height:30px;flex:none;border:1px solid #555;border-radius:4px;background:#f0a870;outline:1px dotted #111;outline-offset:-3px;margin-left:4px;display:flex}
.picked svg{width:26px;height:26px;margin:1px}
.pt{width:22px;height:22px;flex:none;border:1px solid #555;border-radius:3px;background:#eee;margin:0 4px;display:flex}
.pt svg{width:20px;height:20px}
.sp{width:43px;height:30px;flex:none;border:1px solid #667;border-radius:4px;background:linear-gradient(#f8f8f8,#ccc);display:flex;position:relative;overflow:hidden}
.sp svg{width:27px;height:27px;flex:none}
.sp b{position:absolute;left:10px;bottom:2px;font:700 11px/12px "Liberation Sans",sans-serif}
.cb2{position:absolute;right:0;top:0;bottom:0;width:15px;background:linear-gradient(90deg,#3a88e0,#7ab4f0)}
.cb2::after{content:"";position:absolute;left:3px;top:13px;border:4px solid transparent;border-top:4px solid #111;border-bottom:0}
.rule{height:1px;background:#c0c0c0;margin-top:4px;flex:none;box-shadow:0 1px 0 #fff}
.actions{display:flex;gap:7px;padding-left:96px;margin-top:5px;flex:none}
.btn{width:52px;height:18px;border:1px solid #666;border-radius:4px;background:linear-gradient(#fafafa,#e8e8e8 50%,#bbb);text-align:center;font-size:12px;line-height:16px}
.go{background:linear-gradient(#d8f4c8,#90e080 50%,#58b048);border-color:#5a8a4a}
.dFoot{height:9px;flex:none;background:linear-gradient(#000,#111);border-radius:0 0 6px 6px;margin:0 -1px}
.cursor{position:absolute;left:121px;top:226px;width:14px;height:22px}
```
